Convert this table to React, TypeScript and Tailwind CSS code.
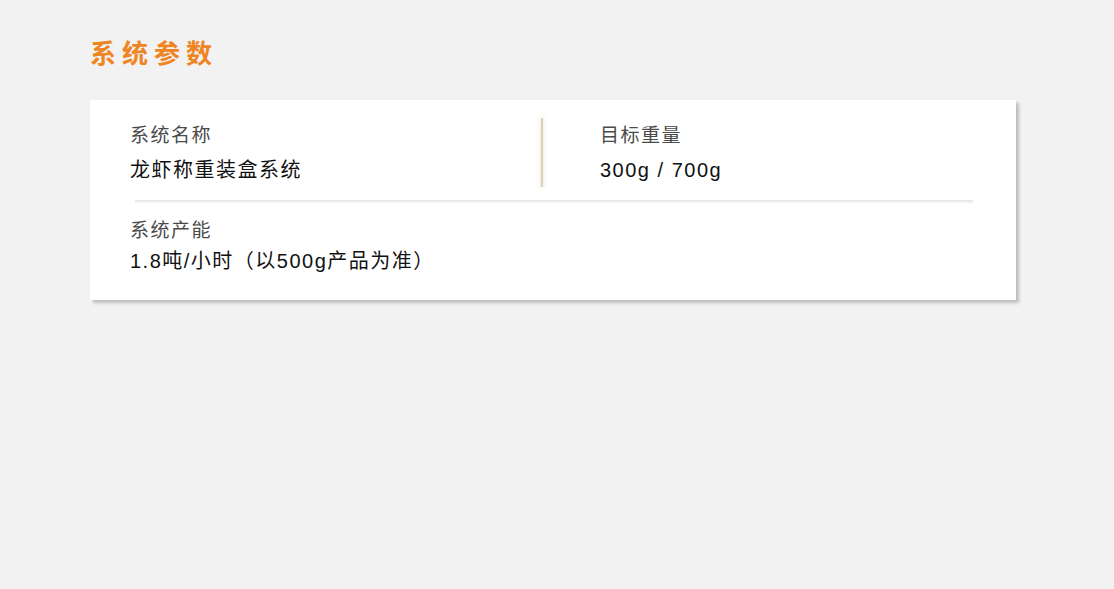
export default function App() {
  const font = { fontFamily: '"Liberation Sans", "Noto Sans CJK SC", sans-serif' };
  return (
    <div className="min-h-screen w-full bg-[#f2f2f2] pl-[90px] pt-[34px]" style={{ fontFamily: '"Noto Sans CJK SC", sans-serif' }}>
      <h1 className="text-[26px] leading-[36px] font-bold tracking-[6px] text-[#ee8422]">系统参数</h1>
      <div className="mt-[30px] w-[926px] bg-white shadow-[3px_3px_3px_rgba(0,0,0,0.22)] px-10 pt-[18px] pb-[26px]" style={font}>
        <div className="flex items-center">
          <div className="w-[411px] flex flex-col">
            <div className="text-[19px] leading-[26px] tracking-[1.5px] text-[#4a4a4a]">系统名称</div>
            <div className="mt-[8px] text-[20px] leading-[26px] tracking-[1.5px] text-[#111]">龙虾称重装盒系统</div>
          </div>
          <div className="w-[2px] h-[69px] bg-[#d8d2c4] shadow-[0_0_4px_rgba(232,205,150,0.8)]" />
          <div className="pl-[57px] flex flex-col">
            <div className="text-[19px] leading-[26px] tracking-[1.5px] text-[#4a4a4a]">目标重量</div>
            <div className="mt-[8px] text-[20px] leading-[26px] tracking-[1.5px] text-[#111]">300g / 700g</div>
          </div>
        </div>
        <div className="mt-[13px] ml-[5px] mr-[3px] h-[2px] bg-[#e9e9e9] shadow-[0_1px_2px_rgba(0,0,0,0.05)]" />
        <div className="mt-[16px] flex flex-col">
          <div className="text-[19px] leading-[26px] tracking-[1.5px] text-[#4a4a4a]">系统产能</div>
          <div className="mt-[4px] text-[20px] leading-[26px] tracking-[1.5px] text-[#111]">1.8吨/小时（以500g产品为准）</div>
        </div>
      </div>
    </div>
  );
}
